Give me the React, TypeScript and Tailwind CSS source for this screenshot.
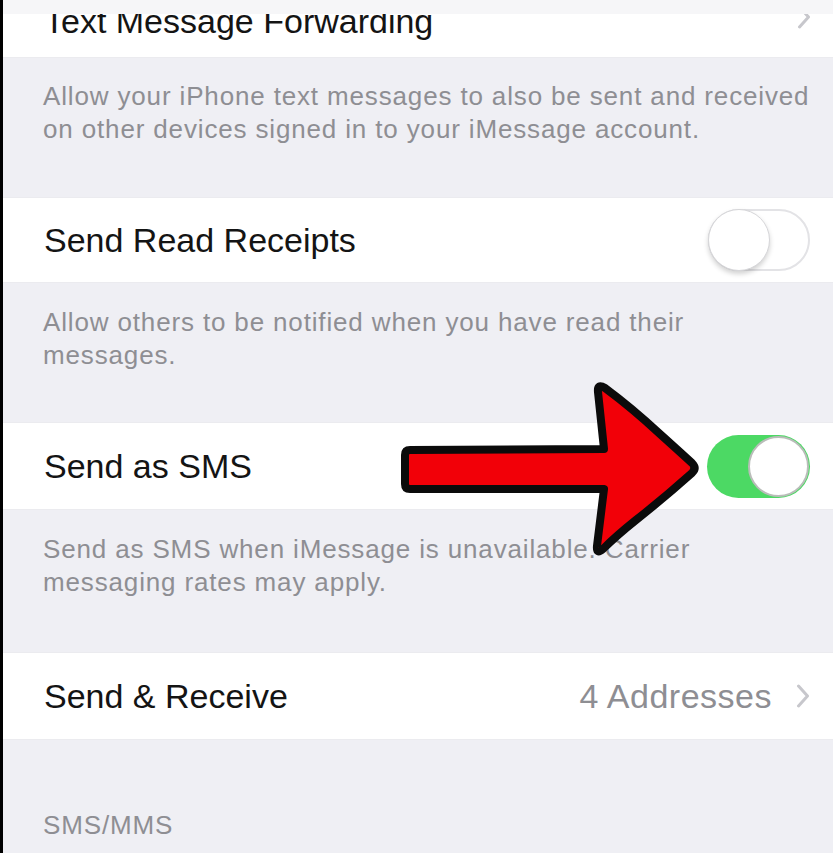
import React from "react";

const sans = { fontFamily: '"Liberation Sans", Arial, sans-serif' };

function Chevron({ className = "" }: { className?: string }) {
  return (
    <svg width="14" height="24" viewBox="0 0 14 24" className={className}>
      <path d="M2.5 2 L11.5 12 L2.5 22" fill="none" stroke="#c7c7cc" strokeWidth="3" strokeLinecap="round" strokeLinejoin="round" />
    </svg>
  );
}

function Toggle({ on }: { on: boolean }) {
  if (on) {
    return (
      <div className="relative h-[63px] w-[103px] rounded-full bg-[#4cd964]">
        <div className="absolute right-[1px] top-[1px] h-[61px] w-[61px] rounded-full border-2 border-[#b9bdb9] bg-white" />
      </div>
    );
  }
  return (
    <div className="relative h-[62px] w-[102px] rounded-full border-2 border-[#e3e3e6] bg-white">
      <div className="absolute -left-[2px] -top-[2px] h-[62px] w-[62px] rounded-full border border-[#d6d6d9] bg-white shadow-[0_3px_5px_rgba(0,0,0,0.18)]" />
    </div>
  );
}

function Footnote({ lines, className = "" }: { lines: string[]; className?: string }) {
  return (
    <div className={`pl-[40px] text-[26px] leading-[33px] tracking-[0.85px] text-[#8e8e93] ${className}`}>
      {lines.map((l) => (
        <div key={l} className="whitespace-nowrap">
          {l}
        </div>
      ))}
    </div>
  );
}

function Row({ title, className = "", children }: { title: string; className?: string; children?: React.ReactNode }) {
  return (
    <div className={`flex items-center justify-between border-y border-[#ebebef] bg-white pl-[41px] pr-[23px] ${className}`}>
      <span className="text-[34px] leading-[38px] text-[#141414]">{title}</span>
      {children}
    </div>
  );
}

export default function App() {
  return (
    <div className="relative h-[853px] w-[833px] overflow-hidden border-l-[3px] border-black bg-[#efeff4]" style={sans}>
      <div className="flex h-full flex-col">
        {/* Text Message Forwarding, scrolled under the bar */}
        <div className="relative h-[58px] shrink-0 overflow-hidden border-b border-[#ebebef] bg-white">
          <div className="pl-[41px] pt-[2px] text-[34px] leading-[38px] text-[#141414]">Text Message Forwarding</div>
          <Chevron className="absolute right-[22px] top-[5px]" />
          <div className="absolute inset-x-0 top-0 h-[14px] bg-[#f6f6f8]" />
        </div>

        <div className="h-[139px] shrink-0 pt-[22px]">
          <Footnote
            lines={[
              "Allow your iPhone text messages to also be sent and received",
              "on other devices signed in to your iMessage account.",
            ]}
          />
        </div>

        <Row title="Send Read Receipts" className="h-[86px] shrink-0">
          <Toggle on={false} />
        </Row>

        <div className="h-[139px] shrink-0 pt-[23px]">
          <Footnote lines={["Allow others to be notified when you have read their", "messages."]} />
        </div>

        <Row title="Send as SMS" className="h-[88px] shrink-0">
          <Toggle on={true} />
        </Row>

        <div className="h-[142px] shrink-0 pt-[23px]">
          <Footnote lines={["Send as SMS when iMessage is unavailable. Carrier", "messaging rates may apply."]} />
        </div>

        <Row title="Send & Receive" className="h-[88px] shrink-0">
          <div className="flex items-center gap-[24px]">
            <span className="text-[34px] leading-[38px] tracking-[0.5px] text-[#8e8e93]">4 Addresses</span>
            <Chevron />
          </div>
        </Row>

        <div className="flex-1 pt-[69px]">
          <Footnote lines={["SMS/MMS"]} />
        </div>
      </div>

      {/* pointer arrow */}
      <svg
        className="pointer-events-none absolute left-[-3px] top-0"
        width="833"
        height="853"
        viewBox="0 0 833 853"
      >
        <path
          d="M 410 450 L 604 449 L 598 392 Q 597 383 605 388 Q 632 408 660 434 Q 680 452 692 463 Q 697 468 692 473 Q 664 498 636 520 Q 616 536 603 549 Q 596 555 597 546 L 604 489 L 410 489 Q 405 489 405 484 L 405 455 Q 405 450 410 450 Z"
          fill="#f20008"
          stroke="#0b0b0b"
          strokeWidth="8"
          strokeLinejoin="round"
        />
      </svg>
    </div>
  );
}
